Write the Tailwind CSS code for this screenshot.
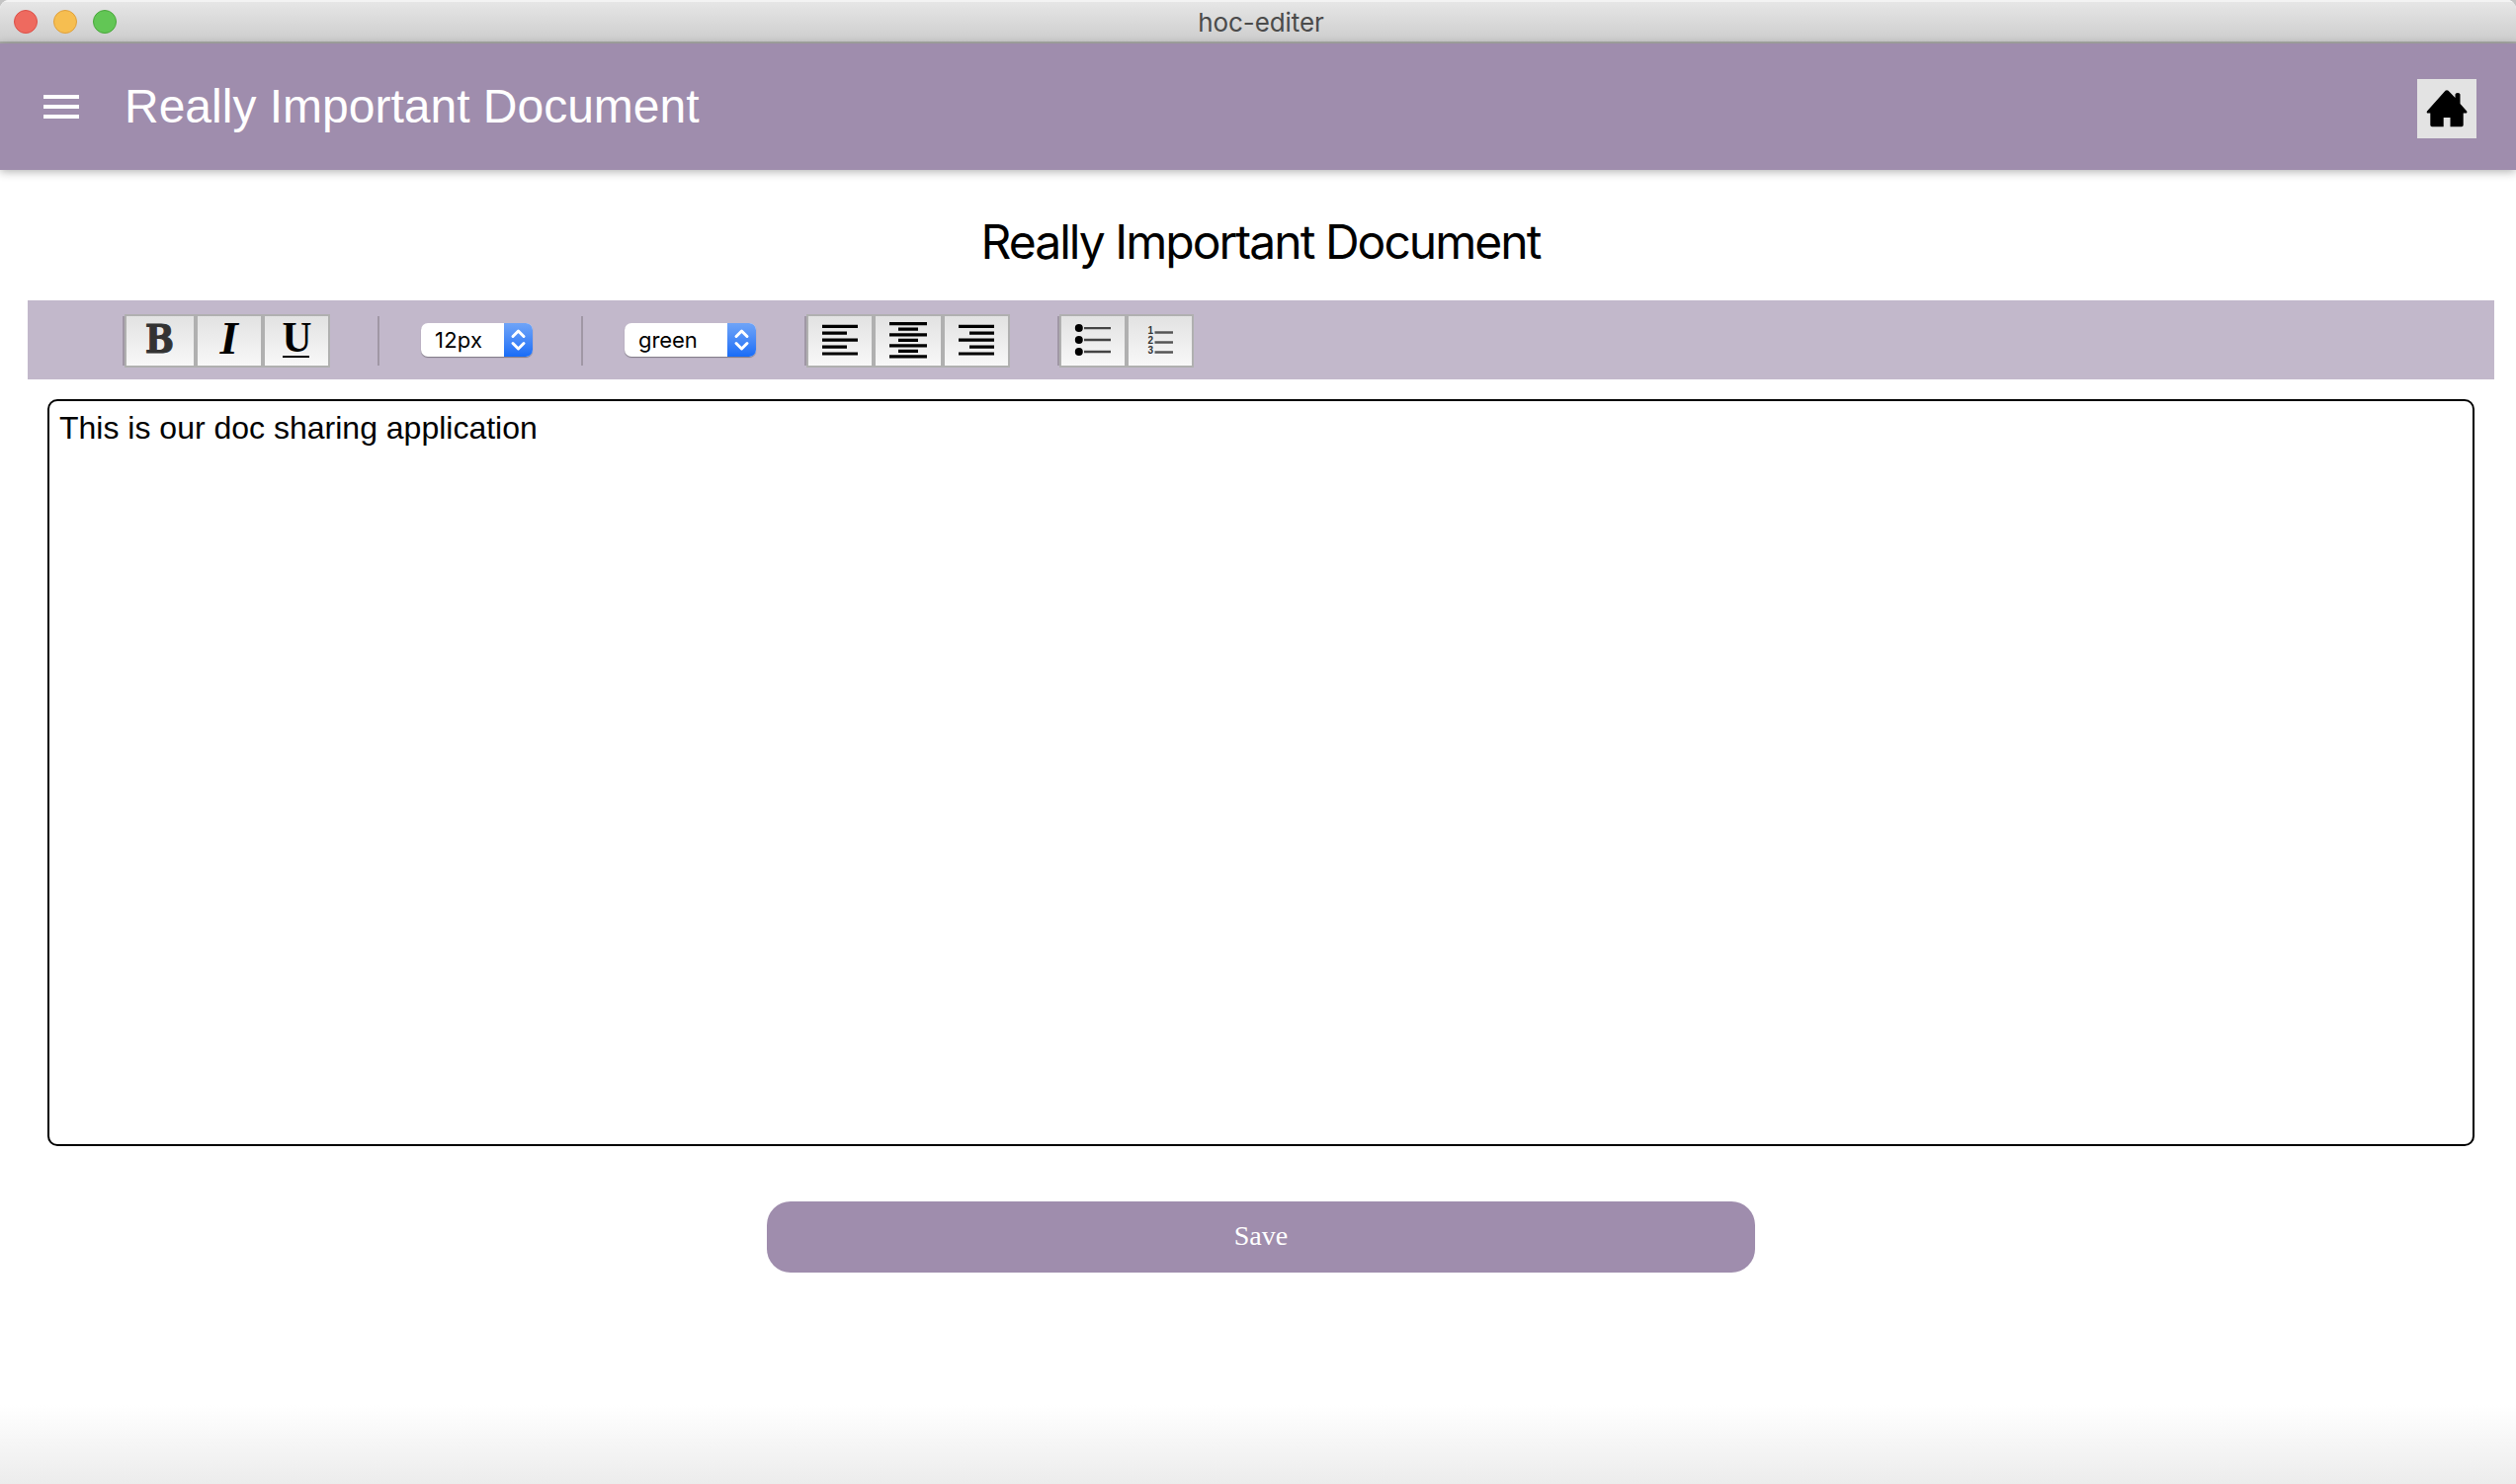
<!DOCTYPE html>
<html lang="en">
<head>
<meta charset="utf-8">
<title>hoc-editer</title>
<script src="https://cdn.jsdelivr.net/npm/@tailwindcss/browser@4"></script>
</head>
<body class="bg-[#c4c4c4]">
<div class="flex h-[1502px] w-[2546px] flex-col overflow-hidden rounded-t-[9px] bg-white font-['Liberation_Sans',Arial,sans-serif] text-black">
  <!-- Window title bar -->
  <div class="grid h-11 shrink-0 grid-cols-[1fr_auto_1fr] items-center border-t-2 border-b-2 border-t-[#f3f3f3] border-b-[#a9aba7] bg-linear-to-b from-[#e6e6e6] to-[#cdcdcd] px-3.5">
    <div class="flex gap-4">
      <span class="size-6 rounded-full border border-[#dc5048] bg-[#ee6a5f]"></span>
      <span class="size-6 rounded-full border border-[#dfa03c] bg-[#f6be50]"></span>
      <span class="size-6 rounded-full border border-[#4aa73c] bg-[#62c655]"></span>
    </div>
    <div class="pt-0.5 pl-1.5 font-['Inter',sans-serif] text-[26px] leading-9 tracking-[-0.1px] text-[#4b4b4b]">hoc-editer</div>
  </div>

  <!-- App header -->
  <header class="z-10 flex h-32 shrink-0 items-center justify-between bg-[#9f8dad] pr-10 pl-11 shadow-[0_2px_9px_rgba(0,0,0,0.3)]">
    <div class="flex items-center gap-[46px]">
      <svg class="h-6 w-9" viewBox="0 0 36 24" fill="#fff"><path d="M0 0h36v4H0zM0 10h36v4H0zM0 20h36v4H0z"/></svg>
      <div class="text-5xl leading-[56px] whitespace-nowrap text-white">Really Important Document</div>
    </div>
    <button class="mt-1 size-15 bg-[#e3e3e3]">
      <svg class="size-15" viewBox="0 0 60 60"><path d="M28.500 11.800Q30 10.500 31.500 11.800L38.500 19V15.500Q38.500 14 41 14Q43.500 14 43.500 15.500V25L50.200 32.500Q51 34.500 49 34.500H46.700V46.500Q46.700 48.300 45 48.300H33.500V39H26.700V48.300H15Q13.300 48.300 13.300 46.500V34.500H11Q9 34.500 10 32.500Z"/></svg>
    </button>
  </header>

  <main class="flex flex-1 flex-col bg-linear-to-b from-white from-94% to-[#ececec] pt-[44px]">
    <h1 class="pl-[5px] text-center font-['Inter',sans-serif] text-5xl leading-[58px] tracking-[-1.97px]">Really Important Document</h1>

    <!-- Formatting toolbar -->
    <div class="mt-[30px] mr-[22px] ml-7 flex h-20 items-start bg-[#c2b8cb] pt-3.5">
      <div class="ml-24 flex h-[54px] items-center">
        <span class="h-[50px] w-0.5 bg-[#a097a5]"></span>
        <button class="h-[54px] w-18 border-2 border-[#b0b0b0] bg-linear-to-b from-[#e2e2e2] to-[#f8f8f8]"><svg class="h-[50px] w-[68px] overflow-visible" viewBox="0 0 68 50"><text x="19" y="36.500" font-family="DejaVu Serif" font-weight="bold" font-size="40" textLength="29" lengthAdjust="spacingAndGlyphs" fill="#333" stroke="#333" stroke-width="1.200">B</text></svg></button>
        <button class="h-[54px] w-[68px] border-2 border-[#b0b0b0] bg-linear-to-b from-[#e2e2e2] to-[#f8f8f8]"><svg class="h-[50px] w-16 overflow-visible" viewBox="0 0 64 50"><text x="22.500" y="37.500" font-family="Liberation Serif" font-weight="bold" font-style="italic" font-size="47">I</text></svg></button>
        <button class="h-[54px] w-[68px] border-2 border-[#b0b0b0] bg-linear-to-b from-[#e2e2e2] to-[#f8f8f8]"><svg class="h-[50px] w-16 overflow-visible" viewBox="0 0 64 50"><text x="17.500" y="35.500" font-family="Liberation Serif" font-weight="bold" font-size="45" textLength="30" lengthAdjust="spacingAndGlyphs">U</text><path d="M18 40h27v2H18z"/></svg></button>
      </div>
      <span class="mt-0.5 ml-12 h-[50px] w-0.5 bg-[#a097a5]"></span>
      <div class="mt-[9px] ml-[42px] flex h-[34px] w-[113px] overflow-hidden rounded-[7px] bg-white font-['Inter',sans-serif] text-[22px] leading-[34px] shadow-[0_1px_1px_rgba(0,0,0,0.35)]">
        <span class="w-[84px] pl-[14px] tracking-[0.2px]">12px</span>
        <svg class="h-[34px] w-[29px] bg-linear-to-b from-[#6fa4f7] to-[#176cf7]" viewBox="0 0 29 34" fill="none" stroke="#fff" stroke-width="3" stroke-linecap="round" stroke-linejoin="round"><path d="M9 13.500L14.500 8L20 13.500M9 20.500L14.500 26L20 20.500"/></svg>
      </div>
      <span class="mt-0.5 ml-[49px] h-[50px] w-0.5 bg-[#a097a5]"></span>
      <div class="mt-[9px] ml-[42px] flex h-[34px] w-[133px] overflow-hidden rounded-[7px] bg-white font-['Inter',sans-serif] text-[22px] leading-[34px] shadow-[0_1px_1px_rgba(0,0,0,0.35)]">
        <span class="w-[104px] pl-[14px] tracking-[-0.1px]">green</span>
        <svg class="h-[34px] w-[29px] bg-linear-to-b from-[#6fa4f7] to-[#176cf7]" viewBox="0 0 29 34" fill="none" stroke="#fff" stroke-width="3" stroke-linecap="round" stroke-linejoin="round"><path d="M9 13.500L14.500 8L20 13.500M9 20.500L14.500 26L20 20.500"/></svg>
      </div>
      <div class="ml-[49px] flex h-[54px] items-center">
        <span class="h-[50px] w-0.5 bg-[#a097a5]"></span>
        <button class="h-[54px] w-[68px] border-2 border-[#b0b0b0] bg-linear-to-b from-[#e2e2e2] to-[#f8f8f8]"><svg class="h-[50px] w-16" viewBox="0 0 64 50" stroke="#000" stroke-width="3.200"><path d="M14 10.300h36M14 17.200h25M14 24.100h36M14 31.100h25M14 38h36"/></svg></button>
        <button class="h-[54px] w-[70px] border-2 border-[#b0b0b0] bg-linear-to-b from-[#e2e2e2] to-[#f8f8f8]"><svg class="h-[50px] w-[66px]" viewBox="0 0 66 50" stroke="#000" stroke-width="3.200"><path d="M14 7.600h38M23 13.200h20M14 18.800h38M23 24.300h20M14 29.800h38M23 35.300h20M14 40.800h38"/></svg></button>
        <button class="h-[54px] w-[68px] border-2 border-[#b0b0b0] bg-linear-to-b from-[#e2e2e2] to-[#f8f8f8]"><svg class="h-[50px] w-16" viewBox="0 0 64 50" stroke="#000" stroke-width="3.200"><path d="M14 10.300h36M25 17.200h25M14 24.100h36M25 31.100h25M14 38h36"/></svg></button>
      </div>
      <div class="ml-12 flex h-[54px] items-center">
        <span class="h-[50px] w-0.5 bg-[#a097a5]"></span>
        <button class="h-[54px] w-[68px] border-2 border-[#b0b0b0] bg-linear-to-b from-[#e2e2e2] to-[#f8f8f8]"><svg class="h-[50px] w-16" viewBox="0 0 64 50"><path d="M23 12.100h27M23 24h27M23 36h27" stroke="#444" stroke-width="2.400"/><circle cx="17.800" cy="12.100" r="4"/><circle cx="17.800" cy="24" r="4"/><circle cx="17.800" cy="36" r="4"/></svg></button>
        <button class="h-[54px] w-[68px] border-2 border-[#b0b0b0] bg-linear-to-b from-[#e2e2e2] to-[#f8f8f8]"><svg class="h-[50px] w-16" viewBox="0 0 64 50"><path d="M26.500 16.500h18.500M26.500 26.500h18.500M26.500 36.500h18.500" stroke="#555" stroke-width="2.400"/><g font-family="Liberation Sans" font-weight="bold" font-size="10" fill="#333"><text x="19.500" y="17.500">1</text><text x="19.500" y="27.500">2</text><text x="19.500" y="38">3</text></g></svg></button>
      </div>
    </div>

    <!-- Document body -->
    <div class="mt-5 mr-[42px] ml-12 h-[756px] rounded-[10px] border-2 border-black bg-white px-2.5 pt-[9px] text-[32px] leading-9">This is our doc sharing application</div>

    <button class="mt-14 ml-[776px] h-18 w-[1000px] rounded-[24px] bg-[#9f8dad] pb-0.5 font-['Liberation_Serif','Times_New_Roman',serif] text-[28px] leading-8 text-white">Save</button>
  </main>
</div>
</body>
</html>
